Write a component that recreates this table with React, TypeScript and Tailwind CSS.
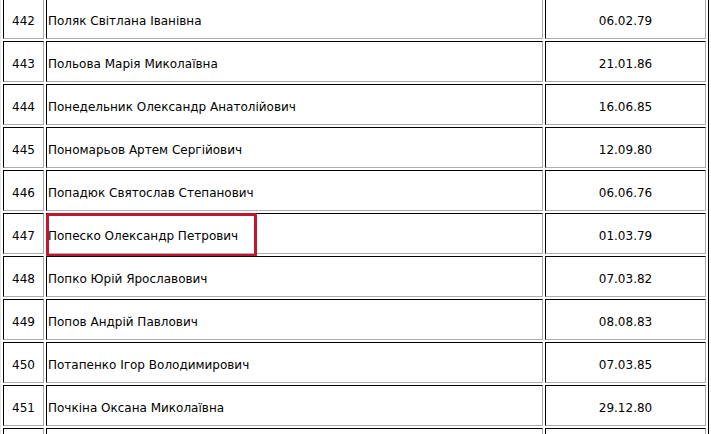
const rows: [string, string, string][] = [
  ["442", "Поляк Світлана Іванівна", "06.02.79"],
  ["443", "Польова Марія Миколаївна", "21.01.86"],
  ["444", "Понедельник Олександр Анатолійович", "16.06.85"],
  ["445", "Пономарьов Артем Сергійович", "12.09.80"],
  ["446", "Попадюк Святослав Степанович", "06.06.76"],
  ["447", "Попеско Олександр Петрович", "01.03.79"],
  ["448", "Попко Юрій Ярославович", "07.03.82"],
  ["449", "Попов Андрій Павлович", "08.08.83"],
  ["450", "Потапенко Ігор Володимирович", "07.03.85"],
  ["451", "Почкіна Оксана Миколаївна", "29.12.80"],
  ["\u00a0", "\u00a0", "\u00a0"],
];

const cell =
  "h-[41px] px-[1px] pt-[5px] pb-[1px] align-middle border border-t-black border-l-black border-r-[#adadad] border-b-[#adadad]";

export default function App() {
  return (
    <div className="w-[711px] h-[434px] overflow-hidden bg-white font-['DejaVu_Sans',sans-serif] text-[12px] text-black">
      <table className="-mt-[5px] w-[709px] table-fixed border-separate border-spacing-[2px] border border-t-[#e6e6e6] border-l-[#e6e6e6] border-r-black border-b-black">
        <tbody>
          {rows.map(([num, name, date], i) => (
            <tr key={i}>
              <td className={`${cell} w-[41px] text-center`}>{num}</td>
              <td className={`${cell} w-[497px] text-left relative`}>
                {name}
                {num === "447" && (
                  <div className="absolute -left-[1px] -top-[1px] w-[211px] h-[44px] border-[3px] border-[#c2152f] rounded-[2px]" />
                )}
              </td>
              <td className={`${cell} w-[161px] text-center`}>{date}</td>
            </tr>
          ))}
        </tbody>
      </table>
    </div>
  );
}
